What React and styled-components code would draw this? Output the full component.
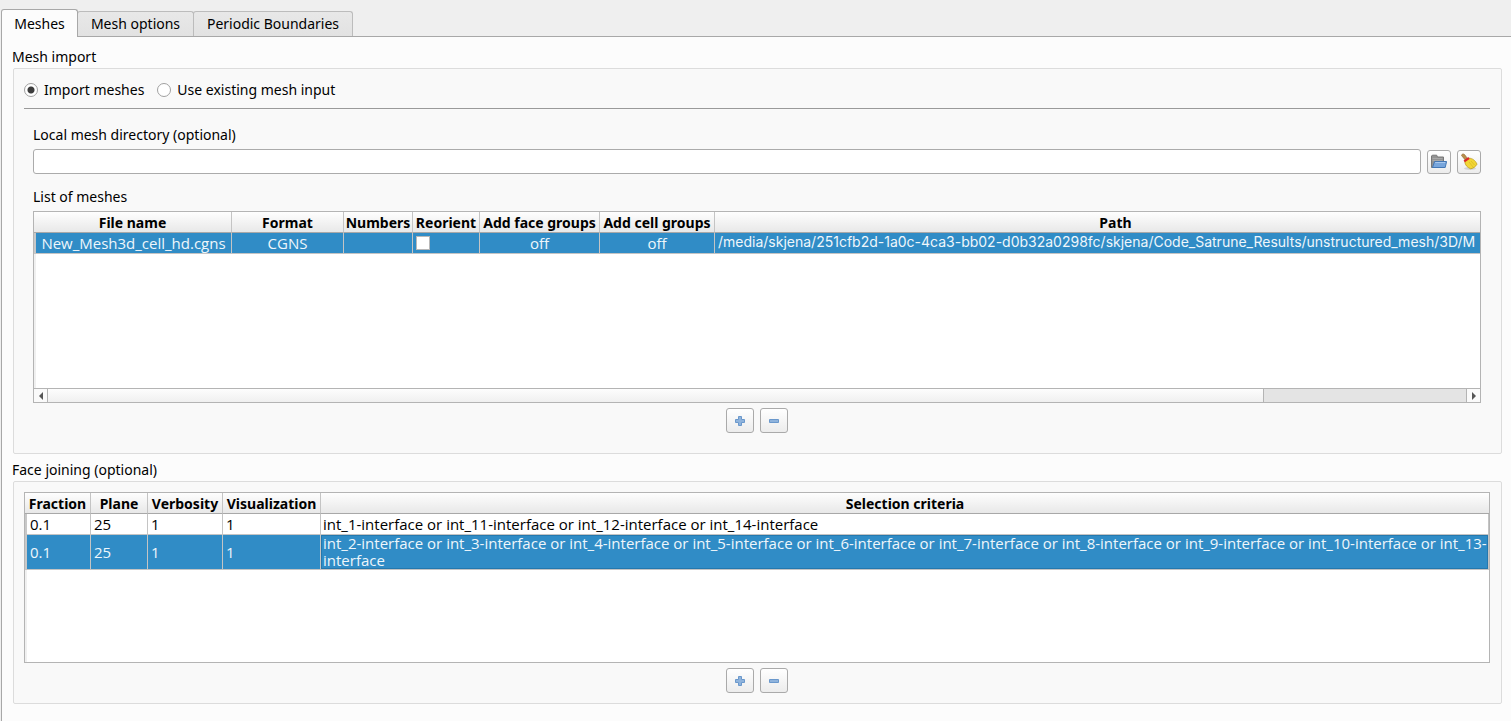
import React, { useState } from "react";
import styled, { createGlobalStyle } from "styled-components";

const GlobalStyle = createGlobalStyle`
  * {
    box-sizing: border-box;
  }

  body {
    margin: 0;
    background: #efefef;
    color: #000;
    font: 14px/20px "Noto Sans", "Open Sans", sans-serif;
  }

  button,
  input {
    font: inherit;
    color: inherit;
  }
`;

const Page = styled.div`
  display: flex;
  flex-direction: column;
  min-height: 100vh;
  padding: 9px 0 0 1px;
`;

const TabBar = styled.div`
  display: flex;
  align-items: flex-end;
`;

const Tab = styled.button`
  height: ${({ $active }) => ($active ? 28 : 25)}px;
  width: ${({ $width }) => $width}px;
  margin: 0 0 ${({ $active }) => ($active ? -1 : 0)}px;
  margin-left: ${({ $active }) => ($active ? 0 : -1)}px;
  padding: 0;
  border: 1px solid ${({ $active }) => ($active ? "#a8a8a8" : "#bcbcbc")};
  border-bottom: 0;
  border-radius: 3px 3px 0 0;
  background: ${({ $active }) => ($active ? "#fcfcfc" : "linear-gradient(#e8e8e8, #e2e2e2)")};
  position: relative;
  z-index: ${({ $active }) => ($active ? 1 : 0)};
  white-space: nowrap;
`;

const Pane = styled.main`
  flex: 1;
  padding: 10px 9px 17px 11px;
  border: solid #a8a8a8;
  border-width: 1px 0 0 1px;
  background: #fcfcfc;
`;

const Section = styled.section`
  & + & {
    margin-top: 6px;
  }
`;

const Title = styled.h2`
  margin: 0 0 1px -1px;
  font-size: 14px;
  font-weight: 400;
`;

const Group = styled.div`
  padding: ${({ $top }) => $top}px 11px ${({ $bottom }) => $bottom}px 10px;
  border: 1px solid #dcdcdc;
  border-radius: 2px;
  background: #f9f9f9;
`;

const RadioRow = styled.div`
  display: flex;
  gap: 13px;
  padding-bottom: 8px;
  border-bottom: 1px solid #9a9a9a;
`;

const RadioLabel = styled.label`
  display: flex;
  align-items: center;
  gap: 6px;
`;

const Radio = styled.input`
  appearance: none;
  width: 14px;
  height: 14px;
  margin: 0;
  border: 1px solid #a0a0a0;
  border-radius: 50%;
  background: #fff;

  &:checked {
    background: radial-gradient(circle, #3c3c3c 3px, #fff 4px);
  }
`;

const Inner = styled.div`
  padding: 16px 9px 0;
`;

const FieldLabel = styled.label`
  display: block;
  margin-bottom: 4px;
`;

const ListLabel = styled.div`
  margin: 13px 0 4px;
`;

const DirectoryRow = styled.div`
  display: flex;
  align-items: center;
  gap: 6px;
`;

const TextBox = styled.input`
  flex: 1;
  min-width: 0;
  height: 25px;
  padding: 0 4px;
  border: 1px solid #ababab;
  border-radius: 3px;
  background: #fff;
`;

const IconButton = styled.button`
  display: grid;
  place-items: center;
  width: ${({ $wide }) => ($wide ? 28 : 24)}px;
  height: ${({ $wide }) => ($wide ? 25 : 24)}px;
  padding: 0;
  border: 1px solid #aaa;
  border-radius: 3px;
  background: linear-gradient(#fff, #ececec);
`;

const Actions = styled.div`
  display: flex;
  justify-content: center;
  gap: 6px;
  margin-top: 5px;
`;

const TableFrame = styled.div`
  border: 1px solid #b4b4b4;
  background: #fff;
`;

const Viewport = styled.div`
  height: ${({ $height }) => $height}px;
  overflow: hidden;
  background: linear-gradient(90deg, #f0f0f0 2px, #fff 2px);
`;

const Table = styled.table`
  width: ${({ $overflow }) => `calc(100% + ${$overflow || 0}px)`};
  table-layout: fixed;
  border-collapse: separate;
  border-spacing: 0;
`;

const Col = styled.col`
  width: ${({ $width }) => ($width ? `${$width}px` : "auto")};
`;

const Th = styled.th`
  height: 21px;
  padding: 2px 0 0;
  border-right: 1px solid #c4c4c4;
  border-bottom: 1px solid #a8a8a8;
  background: linear-gradient(#fefefe, #e8e8e8);
  font-weight: 700;
  line-height: 18px;
  text-align: center;
  white-space: nowrap;

  &:last-child {
    border-right: 0;
  }
`;

const Row = styled.tr`
  background: ${({ $selected }) => ($selected ? "#308cc6" : "#fff")};
  color: ${({ $selected }) => ($selected ? "#eef6fb" : "#000")};
`;

const Td = styled.td`
  height: 21px;
  padding: 0 3px;
  border-right: 1px solid #c4c4c4;
  border-bottom: 1px solid #c4c4c4;
  font-family: "Open Sans", "Noto Sans", sans-serif;
  font-size: 15px;
  line-height: 20px;
  text-align: ${({ $align }) => $align || "left"};
  vertical-align: middle;
  white-space: nowrap;

  &:first-child {
    border-left: 2px solid #c8c8c8;
  }
`;

const PathTd = styled(Td)`
  padding-bottom: 2px;
  font-family: Inter, "Noto Sans", sans-serif;
  font-size: 14px;
  line-height: 18px;
`;

const CriteriaTd = styled(Td)`
  height: ${({ $current }) => ($current ? 35 : 21)}px;
  padding: 0 0 0 2px;
  box-shadow: ${({ $current }) => ($current ? "inset 0 0 0 1px #2478ae" : "none")};
  line-height: 17px;
  white-space: normal;
`;

const Tick = styled.input`
  appearance: none;
  display: block;
  width: 14px;
  height: 14px;
  margin: 0;
  border: 1px solid #b8b8b8;
  background: #fff;

  &:checked {
    background: #444;
  }
`;

const ScrollBar = styled.div`
  display: flex;
  height: 14px;
  border-top: 1px solid #b4b4b4;
  background: #e4e4e4;
`;

const ScrollButton = styled.button`
  display: grid;
  place-items: center;
  width: 14px;
  padding: 0;
  border: solid #b4b4b4;
  border-width: ${({ $right }) => ($right ? "0 0 0 1px" : "0 1px 0 0")};
  background: #fafafa;
`;

const Track = styled.div`
  display: flex;
  flex: 1;

  &::after {
    content: "";
    flex: 1;
  }
`;

const Thumb = styled.div`
  flex: 6;
  border-right: 1px solid #b4b4b4;
  background: linear-gradient(#fdfdfd, #f0f0f0);
`;

const FolderIcon = () => (
  <svg width="16" height="16" viewBox="0 0 16 16" aria-hidden="true">
    <path d="M.5 13.500V2l.8-.8h4.400L6.500 3h6v10.500z" fill="#929292" stroke="#777" />
    <path d="M1.500 4.500h10M1.500 6.500h10" stroke="#a8a8a8" />
    <path d="M3.600 7.500h12l-1.400 6H1.500z" fill="#78a6dc" stroke="#4377b5" />
    <path d="M4.200 8.500h10" stroke="#a9c9ee" />
  </svg>
);

const BroomIcon = () => (
  <svg width="18" height="18" viewBox="0 0 18 18" aria-hidden="true">
    <ellipse cx="10" cy="15.500" rx="6" ry="1.500" fill="#d4d4d4" />
    <path d="M1.500 2.500C1.500 1 3.700.4 4.600 1.600L7.500 5.400 5.200 7z" fill="#b98f4c" stroke="#8c6530" strokeWidth=".6" />
    <path d="M9 5.200c3 0 6.300 2 8 6-1.300 2.300-3.300 4-6.300 4.600C7.200 14.500 5 12 4.800 8.500z" fill="#f2d634" stroke="#b8930d" strokeWidth=".7" />
    <path d="M9 9l4 5M11 8l3.500 4" stroke="#d3b120" strokeWidth=".6" />
    <path d="M4.200 8.300L9 5" stroke="#db2828" strokeWidth="2.200" />
  </svg>
);

const PlusIcon = () => (
  <svg width="12" height="12" viewBox="0 0 12 12" aria-hidden="true">
    <path d="M4.500 1.500h3v3h3v3h-3v3h-3v-3h-3v-3h3z" fill="#8fb3dc" stroke="#6a98cc" />
  </svg>
);

const MinusIcon = () => (
  <svg width="12" height="12" viewBox="0 0 12 12" aria-hidden="true">
    <path d="M1.500 4.500h9v3h-9z" fill="#8fb3dc" stroke="#6a98cc" />
  </svg>
);

const Arrow = ({ right }) => (
  <svg width="6" height="8" viewBox="0 0 6 8" aria-hidden="true">
    <path d={right ? "M1 0l4 4-4 4z" : "M5 0L1 4l4 4z"} fill="#555" />
  </svg>
);

const AddRemove = ({ name }) => (
  <Actions>
    <IconButton $wide type="button" aria-label={`Add ${name}`}>
      <PlusIcon />
    </IconButton>
    <IconButton $wide type="button" aria-label={`Remove ${name}`}>
      <MinusIcon />
    </IconButton>
  </Actions>
);

const tabs = [
  { label: "Meshes", width: 77 },
  { label: "Mesh options", width: 117 },
  { label: "Periodic Boundaries", width: 160 },
];

const meshColumns = [
  { label: "File name", width: 198 },
  { label: "Format", width: 112 },
  { label: "Numbers", width: 69 },
  { label: "Reorient", width: 67 },
  { label: "Add face groups", width: 120 },
  { label: "Add cell groups", width: 115 },
  { label: "Path" },
];

const joinColumns = [
  { label: "Fraction", width: 66 },
  { label: "Plane", width: 57 },
  { label: "Verbosity", width: 75 },
  { label: "Visualization", width: 98 },
  { label: "Selection criteria" },
];

const joinings = [
  {
    values: ["0.1", "25", "1", "1"],
    criteria: "int_1-interface or int_11-interface or int_12-interface or int_14-interface",
  },
  {
    values: ["0.1", "25", "1", "1"],
    criteria:
      "int_2-interface or int_3-interface or int_4-interface or int_5-interface or int_6-interface or int_7-interface or int_8-interface or int_9-interface or int_10-interface or int_13-interface",
    selected: true,
  },
];

const TableHead = ({ columns }) => (
  <>
    <colgroup>
      {columns.map((c) => (
        <Col key={c.label} $width={c.width} />
      ))}
    </colgroup>
    <thead>
      <tr>
        {columns.map((c) => (
          <Th key={c.label} scope="col">
            {c.label}
          </Th>
        ))}
      </tr>
    </thead>
  </>
);

const MeshTable = () => {
  const [reorient, setReorient] = useState(false);

  return (
    <TableFrame>
      <Viewport $height={176}>
        <Table $overflow={36} aria-labelledby="mesh-list">
          <TableHead columns={meshColumns} />
          <tbody>
            <Row $selected>
              <Td $align="center">New_Mesh3d_cell_hd.cgns</Td>
              <Td $align="center">CGNS</Td>
              <Td />
              <Td>
                <Tick
                  type="checkbox"
                  aria-label="Reorient"
                  checked={reorient}
                  onChange={() => setReorient(!reorient)}
                />
              </Td>
              <Td $align="center">off</Td>
              <Td $align="center">off</Td>
              <PathTd>
                /media/skjena/251cfb2d-1a0c-4ca3-bb02-d0b32a0298fc/skjena/Code_Satrune_Results/unstructured_mesh/3D/M
              </PathTd>
            </Row>
          </tbody>
        </Table>
      </Viewport>
      <ScrollBar>
        <ScrollButton type="button" aria-label="Scroll left">
          <Arrow />
        </ScrollButton>
        <Track>
          <Thumb />
        </Track>
        <ScrollButton $right type="button" aria-label="Scroll right">
          <Arrow right />
        </ScrollButton>
      </ScrollBar>
    </TableFrame>
  );
};

const App = () => {
  const [active, setActive] = useState("Meshes");
  const [source, setSource] = useState("import");

  return (
    <Page>
      <GlobalStyle />
      <TabBar role="tablist">
        {tabs.map((tab) => (
          <Tab
            key={tab.label}
            type="button"
            role="tab"
            aria-selected={active === tab.label}
            $active={active === tab.label}
            $width={tab.width}
            onClick={() => setActive(tab.label)}
          >
            {tab.label}
          </Tab>
        ))}
      </TabBar>
      <Pane>
        <Section>
          <Title>Mesh import</Title>
          <Group $top={11} $bottom={20}>
            <RadioRow>
              <RadioLabel>
                <Radio type="radio" name="source" checked={source === "import"} onChange={() => setSource("import")} />
                Import meshes
              </RadioLabel>
              <RadioLabel>
                <Radio type="radio" name="source" checked={source === "existing"} onChange={() => setSource("existing")} />
                Use existing mesh input
              </RadioLabel>
            </RadioRow>
            <Inner>
              <FieldLabel htmlFor="directory">Local mesh directory (optional)</FieldLabel>
              <DirectoryRow>
                <TextBox id="directory" type="text" />
                <IconButton type="button" aria-label="Browse">
                  <FolderIcon />
                </IconButton>
                <IconButton type="button" aria-label="Clear">
                  <BroomIcon />
                </IconButton>
              </DirectoryRow>
              <ListLabel id="mesh-list">List of meshes</ListLabel>
              <MeshTable />
            </Inner>
            <AddRemove name="mesh" />
          </Group>
        </Section>
        <Section>
          <Title id="face-joining">Face joining (optional)</Title>
          <Group $top={10} $bottom={10}>
            <TableFrame>
              <Viewport $height={169}>
                <Table aria-labelledby="face-joining">
                  <TableHead columns={joinColumns} />
                  <tbody>
                    {joinings.map((row) => (
                      <Row key={row.criteria} $selected={row.selected}>
                        {row.values.map((value, i) => (
                          <Td key={joinColumns[i].label}>{value}</Td>
                        ))}
                        <CriteriaTd $current={row.selected}>{row.criteria}</CriteriaTd>
                      </Row>
                    ))}
                  </tbody>
                </Table>
              </Viewport>
            </TableFrame>
            <AddRemove name="face joining" />
          </Group>
        </Section>
      </Pane>
    </Page>
  );
};

export default App;
